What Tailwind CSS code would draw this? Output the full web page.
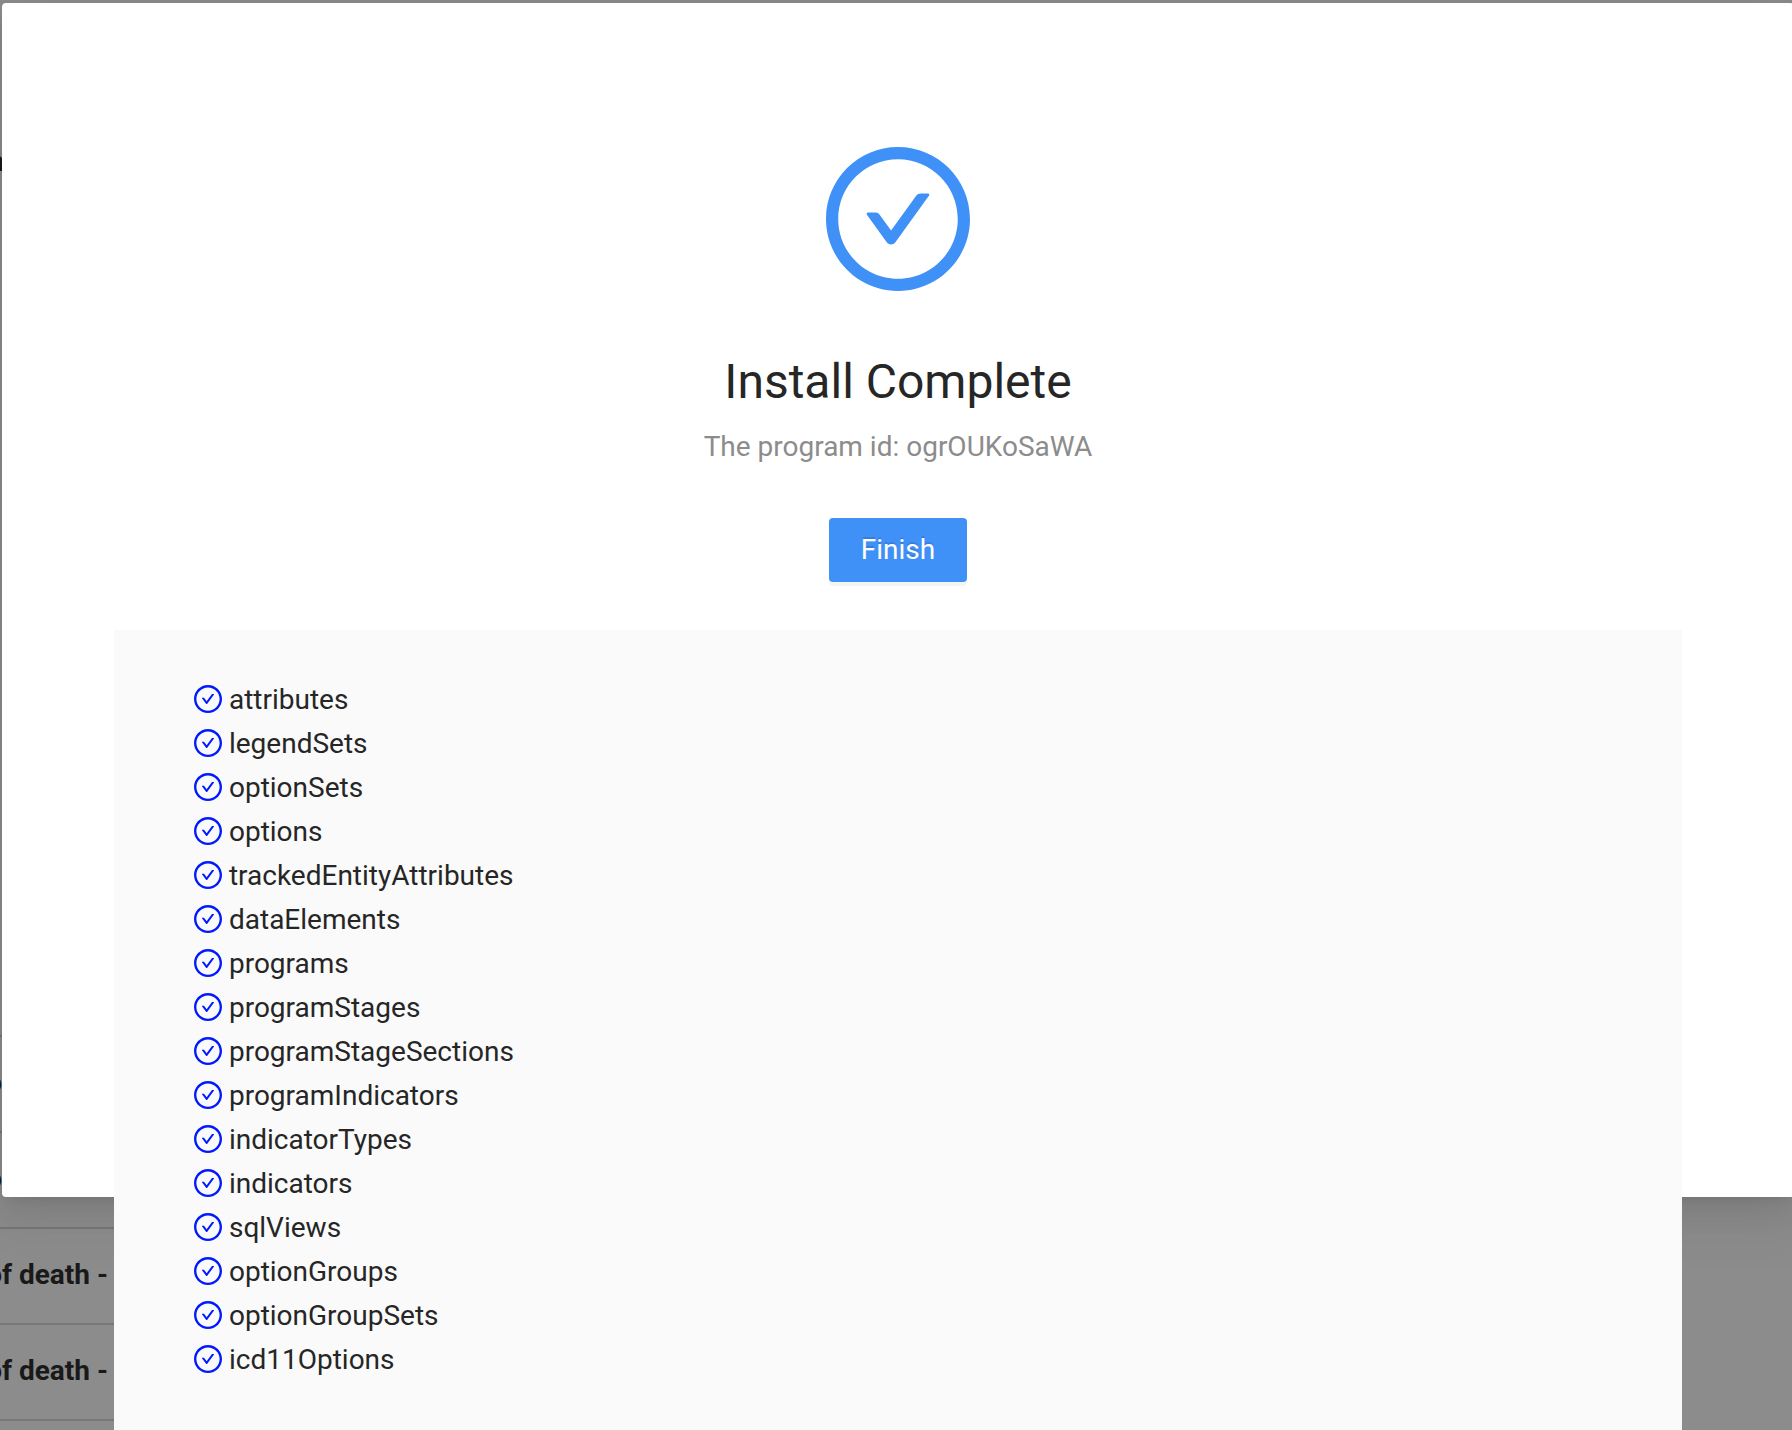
<!DOCTYPE html>
<html lang="en">
<head>
<meta charset="utf-8">
<title>Install Complete</title>
<script src="https://cdn.jsdelivr.net/npm/@tailwindcss/browser@4"></script>
</head>
<body class="bg-[#8c8c8c] font-[Roboto,sans-serif] text-[28px] leading-[44px] text-[#262626] antialiased">
<svg class="hidden" aria-hidden="true">
  <symbol id="check-circle" viewBox="64 64 896 896">
    <path d="M699 353h-46.9c-10.2 0-19.9 4.9-25.9 13.3L469 584.3l-71.2-98.8c-6-8.3-15.6-13.3-25.9-13.3H325c-6.500 0-10.300 7.400-6.500 12.700l124.600 172.800a31.800 31.800 0 0 0 51.700 0l210.600-292c3.900-5.300.1-12.700-6.400-12.700z"/>
    <path d="M512 64C264.600 64 64 264.600 64 512s200.600 448 448 448 448-200.600 448-448S759.400 64 512 64zm0 820c-205.400 0-372-166.600-372-372s166.600-372 372-372 372 166.600 372 372-166.600 372-372 372z"/>
  </symbol>
</svg>
<div class="relative min-h-screen overflow-hidden">
  <!-- Table dimmed behind the dialog -->
  <div class="absolute inset-y-0 left-0 w-1/2 overflow-hidden font-bold text-[#191919]" aria-hidden="true">
    <div class="flex h-[1037px] flex-col border-b-2 border-[#777]">
      <div class="mt-35 flex w-1 justify-end whitespace-nowrap">n</div>
    </div>
    <div class="flex h-24 items-center border-b-2 border-[#777] pb-0.5"><div class="flex w-0.5 justify-end">o</div></div>
    <div class="flex h-24 items-center border-b-2 border-[#777] pb-0.5"><div class="flex w-0.5 justify-end">o</div></div>
    <div class="flex h-24 items-center border-b-2 border-[#777] pb-0.5"><div class="flex w-[108px] justify-end whitespace-nowrap">of death -</div></div>
    <div class="flex h-24 items-center border-b-2 border-[#777] pb-0.5"><div class="flex w-[108px] justify-end whitespace-nowrap">of death -</div></div>
  </div>

  <main role="dialog" aria-labelledby="title" class="relative mt-[3px] -mr-0.5 ml-0.5 h-[1194px] rounded bg-white px-28 pt-36 shadow-[0_6px_12px_-8px_rgba(0,0,0,0.12),0_12px_32px_0_rgba(0,0,0,0.08),0_18px_56px_16px_rgba(0,0,0,0.05)]">
    <div class="flex flex-col items-center text-center">
      <svg class="size-36 fill-[#4091f7]" aria-hidden="true"><use href="#check-circle"/></svg>
      <h1 id="title" class="mt-12 text-5xl leading-[86px]">Install Complete</h1>
      <p class="text-[#8c8c8c]">The program id: ogrOUKoSaWA</p>
      <button type="button" class="mt-[49px] h-16 rounded bg-[#4091f7] px-8 text-white shadow-[0_4px_0_rgba(0,0,0,0.045)] [text-shadow:0_-2px_0_rgba(0,0,0,0.12)]">Finish</button>
    </div>
    <ul class="mt-12 bg-[#fafafa] px-20 py-12">
      <li><svg class="inline-block size-7 fill-[#0019ff] align-[-4px]" aria-hidden="true"><use href="#check-circle"/></svg> attributes</li>
      <li><svg class="inline-block size-7 fill-[#0019ff] align-[-4px]" aria-hidden="true"><use href="#check-circle"/></svg> legendSets</li>
      <li><svg class="inline-block size-7 fill-[#0019ff] align-[-4px]" aria-hidden="true"><use href="#check-circle"/></svg> optionSets</li>
      <li><svg class="inline-block size-7 fill-[#0019ff] align-[-4px]" aria-hidden="true"><use href="#check-circle"/></svg> options</li>
      <li><svg class="inline-block size-7 fill-[#0019ff] align-[-4px]" aria-hidden="true"><use href="#check-circle"/></svg> trackedEntityAttributes</li>
      <li><svg class="inline-block size-7 fill-[#0019ff] align-[-4px]" aria-hidden="true"><use href="#check-circle"/></svg> dataElements</li>
      <li><svg class="inline-block size-7 fill-[#0019ff] align-[-4px]" aria-hidden="true"><use href="#check-circle"/></svg> programs</li>
      <li><svg class="inline-block size-7 fill-[#0019ff] align-[-4px]" aria-hidden="true"><use href="#check-circle"/></svg> programStages</li>
      <li><svg class="inline-block size-7 fill-[#0019ff] align-[-4px]" aria-hidden="true"><use href="#check-circle"/></svg> programStageSections</li>
      <li><svg class="inline-block size-7 fill-[#0019ff] align-[-4px]" aria-hidden="true"><use href="#check-circle"/></svg> programIndicators</li>
      <li><svg class="inline-block size-7 fill-[#0019ff] align-[-4px]" aria-hidden="true"><use href="#check-circle"/></svg> indicatorTypes</li>
      <li><svg class="inline-block size-7 fill-[#0019ff] align-[-4px]" aria-hidden="true"><use href="#check-circle"/></svg> indicators</li>
      <li><svg class="inline-block size-7 fill-[#0019ff] align-[-4px]" aria-hidden="true"><use href="#check-circle"/></svg> sqlViews</li>
      <li><svg class="inline-block size-7 fill-[#0019ff] align-[-4px]" aria-hidden="true"><use href="#check-circle"/></svg> optionGroups</li>
      <li><svg class="inline-block size-7 fill-[#0019ff] align-[-4px]" aria-hidden="true"><use href="#check-circle"/></svg> optionGroupSets</li>
      <li><svg class="inline-block size-7 fill-[#0019ff] align-[-4px]" aria-hidden="true"><use href="#check-circle"/></svg> icd11Options</li>
    </ul>
  </main>
</div>
</body>
</html>
